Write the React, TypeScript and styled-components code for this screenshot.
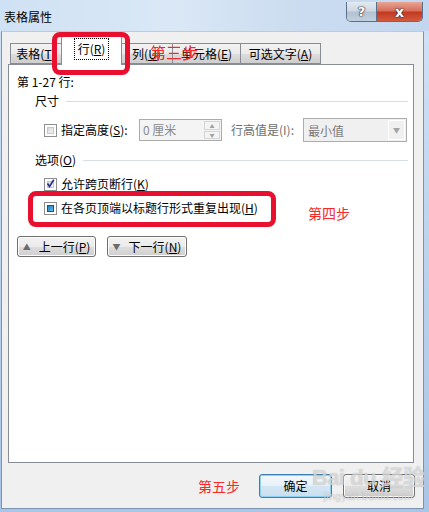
import React from "react";
import styled, { createGlobalStyle } from "styled-components";

const Global = createGlobalStyle`
  html, body { margin: 0; padding: 0; }
  body {
    width: 429px; height: 512px; overflow: hidden;
    font-family: "Noto Sans CJK SC", "Microsoft YaHei", sans-serif;
    font-size: 12px; color: #000;
  }
  u { text-decoration: underline; text-underline-offset: 1px; }
`;

const Window = styled.div`
  position: relative;
  width: 429px;
  height: 512px;
  box-sizing: border-box;
  display: flex;
  flex-direction: column;
  background: linear-gradient(180deg, #c4d8ef 0%, #cfe1f4 8%, #b7d0ec 60%, #a9c5e6 100%);
  overflow: hidden;
`;

const TitleBar = styled.div`
  height: 31px;
  display: flex;
  justify-content: space-between;
  align-items: flex-start;
  padding-left: 4px;
  background: linear-gradient(90deg, #cfe1f4 0%, #dae8f6 40%, #cbdcf0 70%, #c2d7ef 100%);
`;

const Title = styled.div`
  margin-top: 8px;
  line-height: 18px;
  font-size: 12px;
`;

const Caption = styled.div`
  display: flex;
  margin-top: 2px;
  margin-right: 6px;
  border: 1px solid #5b6f88;
  border-top: none;
  border-radius: 0 0 5px 5px;
  overflow: hidden;
  height: 19px;
`;

const CapBtn = styled.div<{ $close?: boolean }>`
  width: ${(p) => (p.$close ? 45 : 29)}px;
  height: 19px;
  display: flex;
  align-items: center;
  justify-content: center;
  font-family: "DejaVu Sans", sans-serif;
  font-weight: bold;
  font-size: ${(p) => (p.$close ? 14 : 13)}px;
  color: #fff;
  text-shadow: 0 0 1px #2b3440, 0 0 1px #2b3440, 0 0 2px #2b3440;
  background: ${(p) =>
    p.$close
      ? "linear-gradient(180deg, #e8a594 0%, #d7705d 45%, #c23a22 55%, #d45a3c 100%)"
      : "linear-gradient(180deg, #e3e9f0 0%, #cfd9e4 45%, #b3c2d3 55%, #c2d0de 100%)"};
  border-left: ${(p) => (p.$close ? "1px solid #5b6f88" : "none")};
`;

const Body = styled.div`
  flex: 1;
  margin: 0 5px 3px 1px;
  border: 1px solid #7d94b1;
  border-top-color: #b9cbe0;
  background: #f0f0f0;
  padding: 4px 8px 0 6px;
  display: flex;
  flex-direction: column;
`;

const TabStrip = styled.div`
  display: flex;
  align-items: flex-end;
  height: 28px;
  margin-left: 2px;
  position: relative;
  z-index: 1;
`;

const Tab = styled.div<{ $w: number; $active?: boolean }>`
  box-sizing: border-box;
  width: ${(p) => p.$w}px;
  height: ${(p) => (p.$active ? 29 : 21)}px;
  margin-bottom: ${(p) => (p.$active ? -1 : 0)}px;
  margin-left: ${(p) => (p.$active ? -1 : 0)}px;
  margin-right: ${(p) => (p.$active ? -1 : 0)}px;
  border: 1px solid #898c95;
  border-bottom: ${(p) => (p.$active ? "none" : "1px solid #898c95")};
  border-left: ${(p) => (p.$active ? "1px solid #898c95" : "none")};
  background: ${(p) =>
    p.$active ? "#fff" : "linear-gradient(180deg, #f2f2f2 0%, #ebebeb 50%, #dddddd 51%, #cfcfcf 100%)"};
  display: flex;
  align-items: center;
  justify-content: center;
  padding-bottom: ${(p) => (p.$active ? 4 : 0)}px;
  position: relative;
  z-index: ${(p) => (p.$active ? 2 : 1)};
  &:first-child { border-left: 1px solid #898c95; }
`;

const Focus = styled.span`
  outline: 1px dotted #000;
  outline-offset: 0;
  padding: 1px 3px;
  line-height: 18px;
`;

const Panel = styled.div`
  width: 406px;
  height: 399px;
  box-sizing: border-box;
  border: 1px solid #898c95;
  background: #fff;
  padding: 9px 5px 0 8px;
  display: flex;
  flex-direction: column;
`;

const Line = styled.div`
  line-height: 16px;
  height: 16px;
`;

const GroupHead = styled.div<{ $top: number }>`
  display: flex;
  align-items: center;
  margin-top: ${(p) => p.$top}px;
  padding-left: 18px;
  height: 16px;
  line-height: 16px;
  &::after {
    content: "";
    flex: 1;
    height: 1px;
    margin-left: 7px;
    background: #d5dfe5;
  }
`;

const Row = styled.div<{ $top: number; $h?: number }>`
  display: flex;
  align-items: center;
  margin-top: ${(p) => p.$top}px;
  height: ${(p) => p.$h ?? 16}px;
  padding-left: 27px;
`;

const Box = styled.div<{ $state?: "checked" | "mixed" }>`
  width: 13px;
  height: 13px;
  box-sizing: border-box;
  border: 1px solid #8e8f8f;
  background: #fff;
  padding: 2px;
  margin-right: 4px;
  flex: none;
  display: flex;
  &::after {
    content: "";
    flex: 1;
    border: 1px solid ${(p) => (p.$state === "mixed" ? "#1c5180" : "#c6c6c6")};
    background: ${(p) =>
      p.$state === "mixed"
        ? "linear-gradient(135deg, #2f7fb8 0%, #3d9ad6 50%, #6cc0ef 100%)"
        : "linear-gradient(135deg, #d9d9d9 0%, #f4f4f4 100%)"};
  }
  svg { position: absolute; }
`;

const BoxWrap = styled.div`
  position: relative;
  display: flex;
  svg { position: absolute; left: 1px; top: 0px; }
`;

const Label = styled.div<{ $w?: number; $muted?: boolean }>`
  width: ${(p) => (p.$w ? `${p.$w}px` : "auto")};
  flex: none;
  color: ${(p) => (p.$muted ? "#6d6d6d" : "#000")};
  white-space: nowrap;
  line-height: 16px;
`;

const Spin = styled.div`
  width: 83px;
  height: 22px;
  box-sizing: border-box;
  border: 1px solid #ababab;
  background: #f4f4f4;
  display: flex;
  align-items: center;
  padding: 1px;
`;

const SpinText = styled.div`
  flex: 1;
  color: #8a8a8a;
  padding-left: 2px;
  line-height: 18px;
`;

const SpinBtns = styled.div`
  width: 16px;
  height: 18px;
  display: flex;
  flex-direction: column;
  gap: 1px;
`;

const SpinBtn = styled.div`
  flex: 1;
  border: 1px solid #d5d5d5;
  background: #f4f4f4;
  display: flex;
  align-items: center;
  justify-content: center;
  font-size: 5px;
  color: #a0a0a0;
  line-height: 1;
`;

const Select = styled.div`
  width: 104px;
  height: 24px;
  box-sizing: border-box;
  border: 1px solid #acacac;
  background: #f0f0f0;
  display: flex;
  align-items: stretch;
  padding: 1px;
`;

const SelectText = styled.div`
  flex: 1;
  color: #7a7a7a;
  padding-left: 3px;
  display: flex;
  align-items: center;
`;

const SelectBtn = styled.div`
  width: 15px;
  border: 1px solid #fff;
  background: #f0f0f0;
  display: flex;
  align-items: center;
  justify-content: center;
  font-size: 7px;
  color: #a4a4a4;
`;

const NavRow = styled.div`
  display: flex;
  gap: 11px;
  margin-top: 20px;
`;

const Btn = styled.div<{ $w: number; $h?: number; $focus?: boolean }>`
  width: ${(p) => p.$w}px;
  height: ${(p) => p.$h ?? 22}px;
  box-sizing: border-box;
  border: 1px solid ${(p) => (p.$focus ? "#3c7fb1" : "#707070")};
  border-radius: 3px;
  background: ${(p) =>
    p.$focus
      ? "linear-gradient(180deg, #f2f8fc 0%, #e6f1f9 50%, #d4e6f3 51%, #c9deee 100%)"
      : "linear-gradient(180deg, #f2f2f2 0%, #ebebeb 50%, #dddddd 51%, #cfcfcf 100%)"};
  box-shadow: ${(p) => (p.$focus ? "inset 0 0 0 1px #8fd0f0" : "inset 0 0 0 1px #fcfcfc")};
  display: flex;
  align-items: center;
  justify-content: center;
  gap: 8px;
  line-height: 16px;
`;

const Arrow = styled.span`
  font-size: 8px;
  color: #6b6b6b;
  margin-top: 1px;
`;

const Footer = styled.div`
  display: flex;
  align-items: center;
  justify-content: flex-end;
  margin-top: 11px;
  gap: 11px;
`;

const Note = styled.div<{ $size: number }>`
  color: #f5282a;
  font-size: ${(p) => p.$size}px;
  line-height: 1;
  white-space: nowrap;
`;

const StepNote = styled(Note)`
  margin-right: 8px;
`;

const Highlight = styled.div<{ $x: number; $y: number; $w: number; $h: number }>`
  position: absolute;
  left: ${(p) => p.$x}px;
  top: ${(p) => p.$y}px;
  width: ${(p) => p.$w}px;
  height: ${(p) => p.$h}px;
  box-sizing: border-box;
  border: 5px solid #e8102e;
  border-radius: 8px;
  z-index: 5;
  pointer-events: none;
`;

const Floating = styled.div<{ $x: number; $y: number }>`
  position: absolute;
  left: ${(p) => p.$x}px;
  top: ${(p) => p.$y}px;
  z-index: 6;
`;

const Watermark = styled.div`
  position: absolute;
  left: 312px;
  top: 465px;
  z-index: 7;
  color: rgba(255, 255, 255, 0.55);
  text-shadow: 0 0 1px rgba(120, 120, 120, 0.6);
  font-family: "Liberation Sans", sans-serif;
  pointer-events: none;
  display: flex;
  flex-direction: column;
  align-items: center;
`;

const WmBig = styled.div`
  font-size: 22px;
  font-weight: bold;
  line-height: 26px;
  letter-spacing: -0.5px;
  font-family: "Liberation Sans", "Noto Sans CJK SC", sans-serif;
`;

const WmSmall = styled.div`
  font-size: 10px;
  line-height: 12px;
  letter-spacing: 0.5px;
`;

const Check = () => (
  <svg width="11" height="11" viewBox="0 0 11 11">
    <path d="M2.5 5.5 L4.5 8.5 L8.8 1.8" fill="none" stroke="#22318a" strokeWidth="1.6" />
  </svg>
);

export default function App() {
  return (
    <>
      <Global />
      <Window>
        <TitleBar>
          <Title>表格属性</Title>
          <Caption>
            <CapBtn>?</CapBtn>
            <CapBtn $close>x</CapBtn>
          </Caption>
        </TitleBar>
        <Body>
          <TabStrip>
            <Tab $w={52}>表格(<u>T</u>)</Tab>
            <Tab $w={61} $active>
              <Focus>行(<u>R</u>)</Focus>
            </Tab>
            <Tab $w={52}>列(<u>U</u>)</Tab>
            <Tab $w={68}>单元格(<u>E</u>)</Tab>
            <Tab $w={80}>可选文字(<u>A</u>)</Tab>
          </TabStrip>
          <Panel>
            <Line>第 1-27 行:</Line>
            <GroupHead $top={3}>尺寸</GroupHead>
            <Row $top={9} $h={24}>
              <Box />
              <Label $w={78}>指定高度(<u>S</u>):</Label>
              <Spin>
                <SpinText>0 厘米</SpinText>
                <SpinBtns>
                  <SpinBtn>▲</SpinBtn>
                  <SpinBtn>▼</SpinBtn>
                </SpinBtns>
              </Spin>
              <Label $w={72} $muted style={{ marginLeft: 9 }}>
                行高值是(I):
              </Label>
              <Select>
                <SelectText>最小值</SelectText>
                <SelectBtn>▼</SelectBtn>
              </Select>
            </Row>
            <GroupHead $top={10}>选项(<u>O</u>)</GroupHead>
            <Row $top={8}>
              <BoxWrap>
                <Box />
                <Check />
              </BoxWrap>
              <Label>允许跨页断行(<u>K</u>)</Label>
            </Row>
            <Row $top={8}>
              <Box $state="mixed" />
              <Label>在各页顶端以标题行形式重复出现(<u>H</u>)</Label>
            </Row>
            <NavRow>
              <Btn $w={79} $h={21}>
                <Arrow>▲</Arrow>
                <span>上一行(<u>P</u>)</span>
              </Btn>
              <Btn $w={80} $h={21}>
                <Arrow>▼</Arrow>
                <span>下一行(<u>N</u>)</span>
              </Btn>
            </NavRow>
          </Panel>
          <Footer>
            <StepNote $size={14}>第五步</StepNote>
            <Btn $w={73} $h={24} $focus>确定</Btn>
            <Btn $w={72} $h={24}>取消</Btn>
          </Footer>
        </Body>
        <Highlight $x={52} $y={32} $w={78} $h={43} />
        <Highlight $x={28} $y={191} $w={248} $h={36} />
        <Floating $x={150} $y={44}>
          <Note $size={16}>第三步</Note>
        </Floating>
        <Floating $x={308} $y={206}>
          <Note $size={14}>第四步</Note>
        </Floating>
        <Watermark>
          <WmBig>Bai du 经验</WmBig>
          <WmSmall>jingyan.baidu.com</WmSmall>
        </Watermark>
      </Window>
    </>
  );
}
